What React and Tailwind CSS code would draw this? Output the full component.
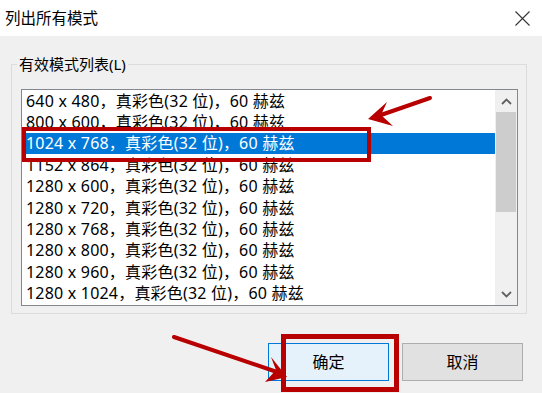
import React from "react";

const rows = [
  "640 x 480，真彩色(32 位)，60 赫兹",
  "800 x 600，真彩色(32 位)，60 赫兹",
  "1024 x 768，真彩色(32 位)，60 赫兹",
  "1152 x 864，真彩色(32 位)，60 赫兹",
  "1280 x 600，真彩色(32 位)，60 赫兹",
  "1280 x 720，真彩色(32 位)，60 赫兹",
  "1280 x 768，真彩色(32 位)，60 赫兹",
  "1280 x 800，真彩色(32 位)，60 赫兹",
  "1280 x 960，真彩色(32 位)，60 赫兹",
  "1280 x 1024，真彩色(32 位)，60 赫兹",
];

const font = { fontFamily: '"Noto Sans", "Noto Sans CJK SC", sans-serif' };

export default function App() {
  return (
    <div
      className="relative w-[542px] h-[393px] overflow-hidden bg-[#f0f0f0] text-[15px] text-black"
      style={font}
    >
      {/* Title bar */}
      <div className="h-[36px] bg-white flex items-center justify-between pl-[5px] pr-[12px]">
        <span className="leading-[20px] text-[15.5px]">列出所有模式</span>
        <svg width="15" height="15" viewBox="0 0 15 15">
          <path d="M0.5 0.5 L14.5 14.5 M14.5 0.5 L0.5 14.5" stroke="#333" strokeWidth="1.1" fill="none" />
        </svg>
      </div>

      {/* Group box */}
      <div className="relative ml-[11px] mt-[28px] w-[516px] h-[250px] border border-[#dcdcdc] pl-[9px] pt-[24px] pr-[7px]">
        <span className="absolute left-[5px] top-[-11px] bg-[#f0f0f0] px-[2px] leading-[20px]">
          有效模式列表(L)
        </span>

        {/* List box */}
        <div className="flex w-[497px] h-[217px] border border-[#828790] bg-white">
          <div className="flex-1 flex flex-col text-[16px] tracking-[0.2px]">
            {rows.map((r, i) => (
              <div
                key={i}
                className={
                  i === 2
                    ? "h-[21.4px] flex items-center pl-[4px] bg-[#0078d7] text-white whitespace-nowrap leading-[20px]"
                    : "h-[21.4px] flex items-center pl-[4px] whitespace-nowrap leading-[20px]"
                }
              >
                {r}
              </div>
            ))}
          </div>
          {/* Scrollbar */}
          <div className="w-[22px] bg-[#f0f0f0] flex flex-col">
            <div className="h-[22px] flex items-center justify-center">
              <svg width="11" height="7" viewBox="0 0 11 7">
                <path d="M1 6 L5.5 1.5 L10 6" stroke="#606060" strokeWidth="1.8" fill="none" />
              </svg>
            </div>
            <div className="h-[100px] mx-[1px] bg-[#cdcdcd]" />
            <div className="flex-1" />
            <div className="h-[22px] flex items-center justify-center">
              <svg width="11" height="7" viewBox="0 0 11 7">
                <path d="M1 1 L5.5 5.5 L10 1" stroke="#606060" strokeWidth="1.8" fill="none" />
              </svg>
            </div>
          </div>
        </div>
      </div>

      {/* Buttons */}
      <div className="flex justify-end gap-[13px] pr-[19px] mt-[29px] text-[16px]">
        <button className="w-[121px] h-[38px] bg-[#e5f1fb] border border-[#0078d7] flex items-center justify-center leading-[20px]">
          确定
        </button>
        <button className="w-[121px] h-[38px] bg-[#e1e1e1] border border-[#adadad] flex items-center justify-center leading-[20px]">
          取消
        </button>
      </div>

      {/* Annotations */}
      <div className="absolute left-[22px] top-[127px] w-[349px] h-[35px] border-4 border-[#b80000]" />
      <div className="absolute left-[281px] top-[334px] w-[118px] h-[58px] border-[5px] border-[#b80000]" />
      <svg className="absolute left-0 top-0" width="542" height="393" viewBox="0 0 542 393">
        <path d="M430 98 L378 116" stroke="#b80000" strokeWidth="4" strokeLinecap="round" fill="none" />
        <polygon points="368,119 387,102 381,115 393,126" fill="#b80000" />
        <path d="M174 337 L277 372" stroke="#b80000" strokeWidth="4" strokeLinecap="round" fill="none" />
        <polygon points="287,377 271,357 276,370 265,382" fill="#b80000" />
      </svg>
    </div>
  );
}
